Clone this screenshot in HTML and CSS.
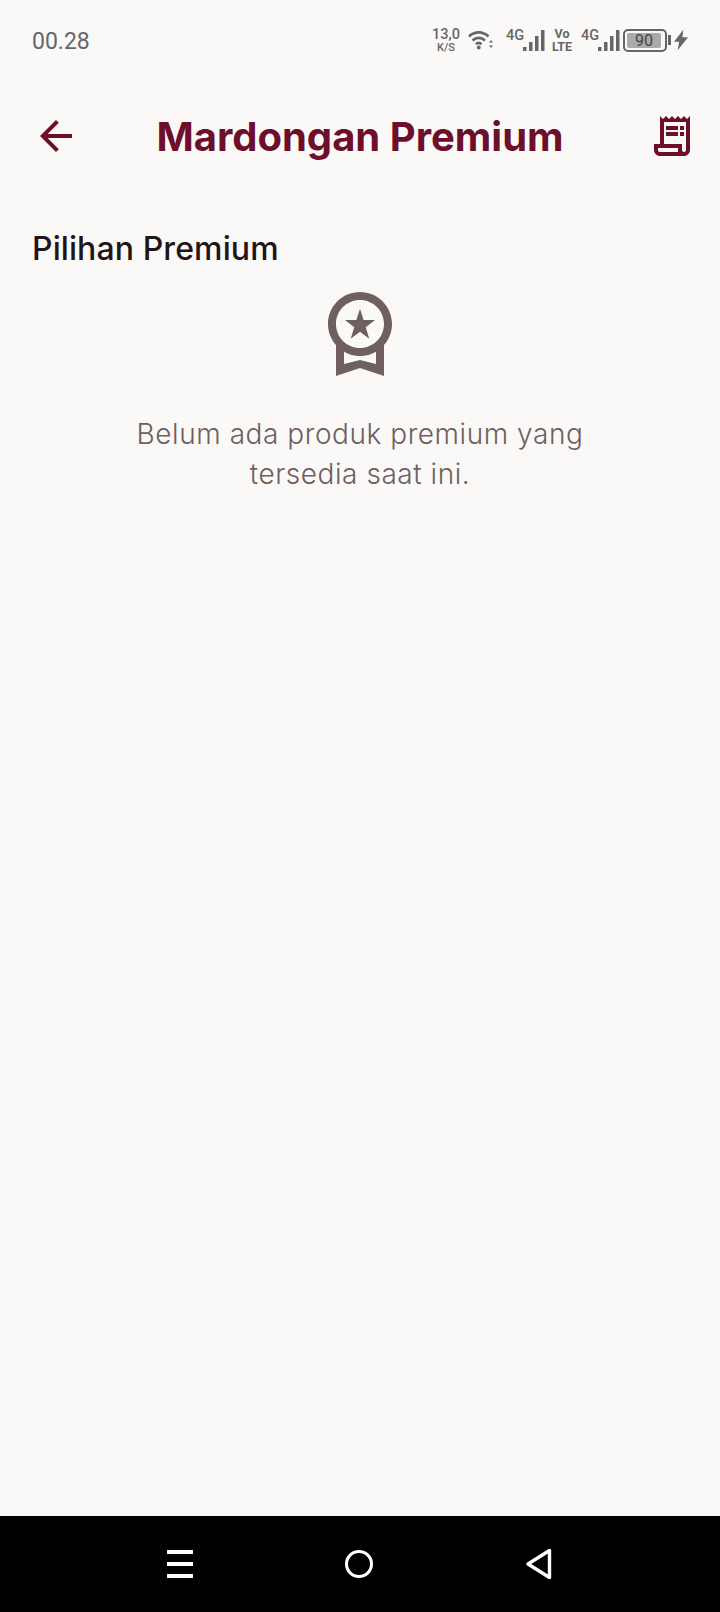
FILE: index.html
```html
<!DOCTYPE html>
<html lang="en">
<head>
  <meta charset="UTF-8" />
  <meta name="viewport" content="width=device-width, initial-scale=1.0"/>
  <title>Mardongan Premium</title>
  <link rel="stylesheet" href="styles.css">
</head>
<body>
  <div class="screen">
    <div class="statusbar">
      <span class="clock">00.28</span>
      <div class="status-icons">
        <div class="speed"><span class="speed-num">13,0</span><span class="speed-unit">K/S</span></div>
        <svg class="wifi" width="26" height="22" viewBox="0 0 26 22">
          <path d="M1 7.5C6.5 2 15 2 20.500 7.500" fill="none" stroke="#666" stroke-width="2.600"/>
          <path d="M4.500 11.500C8 8 13.500 8 17 11.500" fill="none" stroke="#666" stroke-width="2.600"/>
          <path d="M8 15.200C9.700 13.600 11.800 13.600 13.500 15.200" fill="none" stroke="#666" stroke-width="2.600"/>
          <circle cx="10.750" cy="18.500" r="1.900" fill="#666"/>
          <path d="M23 11l2 2.600h-4zM23 19l2-2.600h-4z" fill="#666"/>
        </svg>
        <div class="signal">
          <span class="net">4G</span>
          <svg class="bars" width="22" height="22" viewBox="0 0 22 22">
            <rect x="0" y="17" width="3.500" height="4" fill="#666"/>
            <rect x="6" y="12" width="3.500" height="9" fill="#666"/>
            <rect x="12" y="6" width="3.500" height="15" fill="#666"/>
            <rect x="18" y="0" width="3.500" height="21" fill="#666"/>
          </svg>
        </div>
        <div class="volte"><span>Vo</span><span>LTE</span></div>
        <div class="signal">
          <span class="net">4G</span>
          <svg class="bars" width="22" height="22" viewBox="0 0 22 22">
            <rect x="0" y="17" width="3.500" height="4" fill="#666"/>
            <rect x="6" y="12" width="3.500" height="9" fill="#666"/>
            <rect x="12" y="6" width="3.500" height="15" fill="#666"/>
            <rect x="18" y="0" width="3.500" height="21" fill="#666"/>
          </svg>
        </div>
        <div class="battery"><div class="battery-fill">90</div></div>
        <div class="battery-tip"></div>
        <svg class="bolt" width="14" height="22" viewBox="0 0 15 22">
          <path d="M10 0 0 13h5.500L4 22l11-14H9z" fill="#666"/>
        </svg>
      </div>
    </div>

    <header class="appbar">
      <svg class="icon" width="48" height="48" viewBox="0 0 24 24">
        <path d="M20 11H7.830l5.590-5.590L12 4l-8 8 8 8 1.410-1.410L7.830 13H20v-2z"/>
      </svg>
      <h1>Mardongan Premium</h1>
      <svg class="icon" width="48" height="48" viewBox="0 0 24 24">
        <path d="M19.500 3.500 18 2l-1.500 1.500L15 2l-1.500 1.500L12 2l-1.500 1.500L9 2 7.500 3.500 6 2v14H3v3c0 1.660 1.340 3 3 3h12c1.660 0 3-1.340 3-3V2l-1.500 1.500zM15 20H6c-.55 0-1-.45-1-1v-1h10v2zm4-1c0 .55-.45 1-1 1s-1-.45-1-1v-3H8V5h11v14z"/>
        <path d="M9 7h6v2H9zM16 7h2v2h-2zM9 10h6v2H9zM16 10h2v2h-2z"/>
      </svg>
    </header>

    <main class="content">
      <h2>Pilihan Premium</h2>
      <div class="empty">
        <svg class="medal" width="96" height="96" viewBox="0 0 24 24">
          <path d="M9.680 13.690 12 11.930l2.310 1.760-.88-2.850L15.750 9h-2.840L12 6.190 11.090 9H8.250l2.310 1.840-.88 2.850zM20 10c0-4.420-3.580-8-8-8s-8 3.580-8 8c0 2.030.76 3.870 2 5.280V23l6-2 6 2v-7.720c1.240-1.410 2-3.250 2-5.280zm-8-6c3.310 0 6 2.690 6 6s-2.690 6-6 6-6-2.690-6-6 2.690-6 6-6zm0 15-4 1.020v-3.100c1.180.68 2.540 1.080 4 1.080s2.820-.4 4-1.080v3.100L12 19z"/>
        </svg>
        <p>Belum ada produk premium yang<br>tersedia saat ini.</p>
      </div>
    </main>

    <nav class="navbar">
      <div class="nav-menu"><span></span><span></span><span></span></div>
      <div class="nav-home"></div>
      <svg width="28" height="34" viewBox="0 0 28 34">
        <path d="M24.500 3.500v27L3 17z" fill="none" stroke="#fff" stroke-width="3.400" stroke-linejoin="round"/>
      </svg>
    </nav>
  </div>
</body>
</html>
```

FILE: styles.css
```css
html, body { margin: 0; padding: 0; }
body {
  background: #fbf9f7; color: #221517;
  font-family: "Inter", "Liberation Sans", sans-serif;
}
.screen {
  width: 720px; height: 1612px;
  display: flex; flex-direction: column;
}

/* status bar */
.statusbar {
  height: 64px; padding: 16px 32px 0 32px; box-sizing: border-box;
  display: flex; align-items: center; justify-content: space-between;
  color: #666; font-family: "Roboto", sans-serif;
}
.clock { font-size: 23px; padding-top: 3px; }
.status-icons { display: flex; align-items: center; height: 32px; }
.speed {
  display: flex; flex-direction: column; align-items: center;
  width: 30px; margin-right: 7px; line-height: 1;
}
.speed-num { font-size: 14.500px; font-weight: 500; line-height: 15px; }
.speed-unit { font-size: 11px; font-weight: 500; line-height: 11px; }
.wifi { margin-right: 12px; }
.signal { display: flex; align-items: flex-start; height: 24px; }
.bars { margin-top: 2px; }
.net { font-size: 14.500px; font-weight: 500; line-height: 16px; width: 17px; }
.volte {
  display: flex; flex-direction: column; align-items: center;
  width: 22px; margin: 0 8px 0 6px;
  font-size: 12.500px; font-weight: 700; line-height: 13px;
}
.battery {
  width: 44px; height: 23px; box-sizing: border-box; margin-left: 3px;
  border: 2px solid #666; border-radius: 5px; padding: 2px;
  display: flex;
}
.battery-fill {
  width: 34px; background: #aaa; border-radius: 2px; color: #444;
  font-size: 16px; line-height: 15px; text-align: center;
}
.battery-tip { width: 3px; height: 10px; background: #666; margin: 0 3px 0 1px; }

/* app bar */
.appbar {
  height: 48px; margin-top: 48px; padding: 0 24px 0 32px;
  display: flex; align-items: center; justify-content: space-between;
}
.appbar h1 {
  margin: 1px 8px 0 0; color: #6d0f2b;
  font-size: 40px; font-weight: 650; line-height: 48px;
}
.icon { fill: #6d0f2b; display: block; }

/* content */
.content { flex: 1; padding: 0 32px; }
.content h2 {
  margin: 69px 0 0; font-size: 32px; font-weight: 500; line-height: 40px; letter-spacing: 0.1px;
}
.empty {
  display: flex; flex-direction: column; align-items: center;
  margin-top: 15px; color: #6f5f60;
}
.medal { fill: #6f5f60; display: block; }
.empty p {
  margin: 34px 0 0; text-align: center; font-weight: 350;
  font-size: 28px; line-height: 40px; letter-spacing: 0.55px;
}

/* navigation bar */
.navbar {
  height: 96px; background: #000;
  display: flex; align-items: center; justify-content: center; gap: 152px;
}
.nav-menu { width: 26px; display: flex; flex-direction: column; gap: 8px; }
.nav-menu span { height: 4px; background: #fff; display: block; }
.nav-home {
  width: 28px; height: 28px; box-sizing: border-box;
  border: 3.500px solid #fff; border-radius: 50%;
}
```
